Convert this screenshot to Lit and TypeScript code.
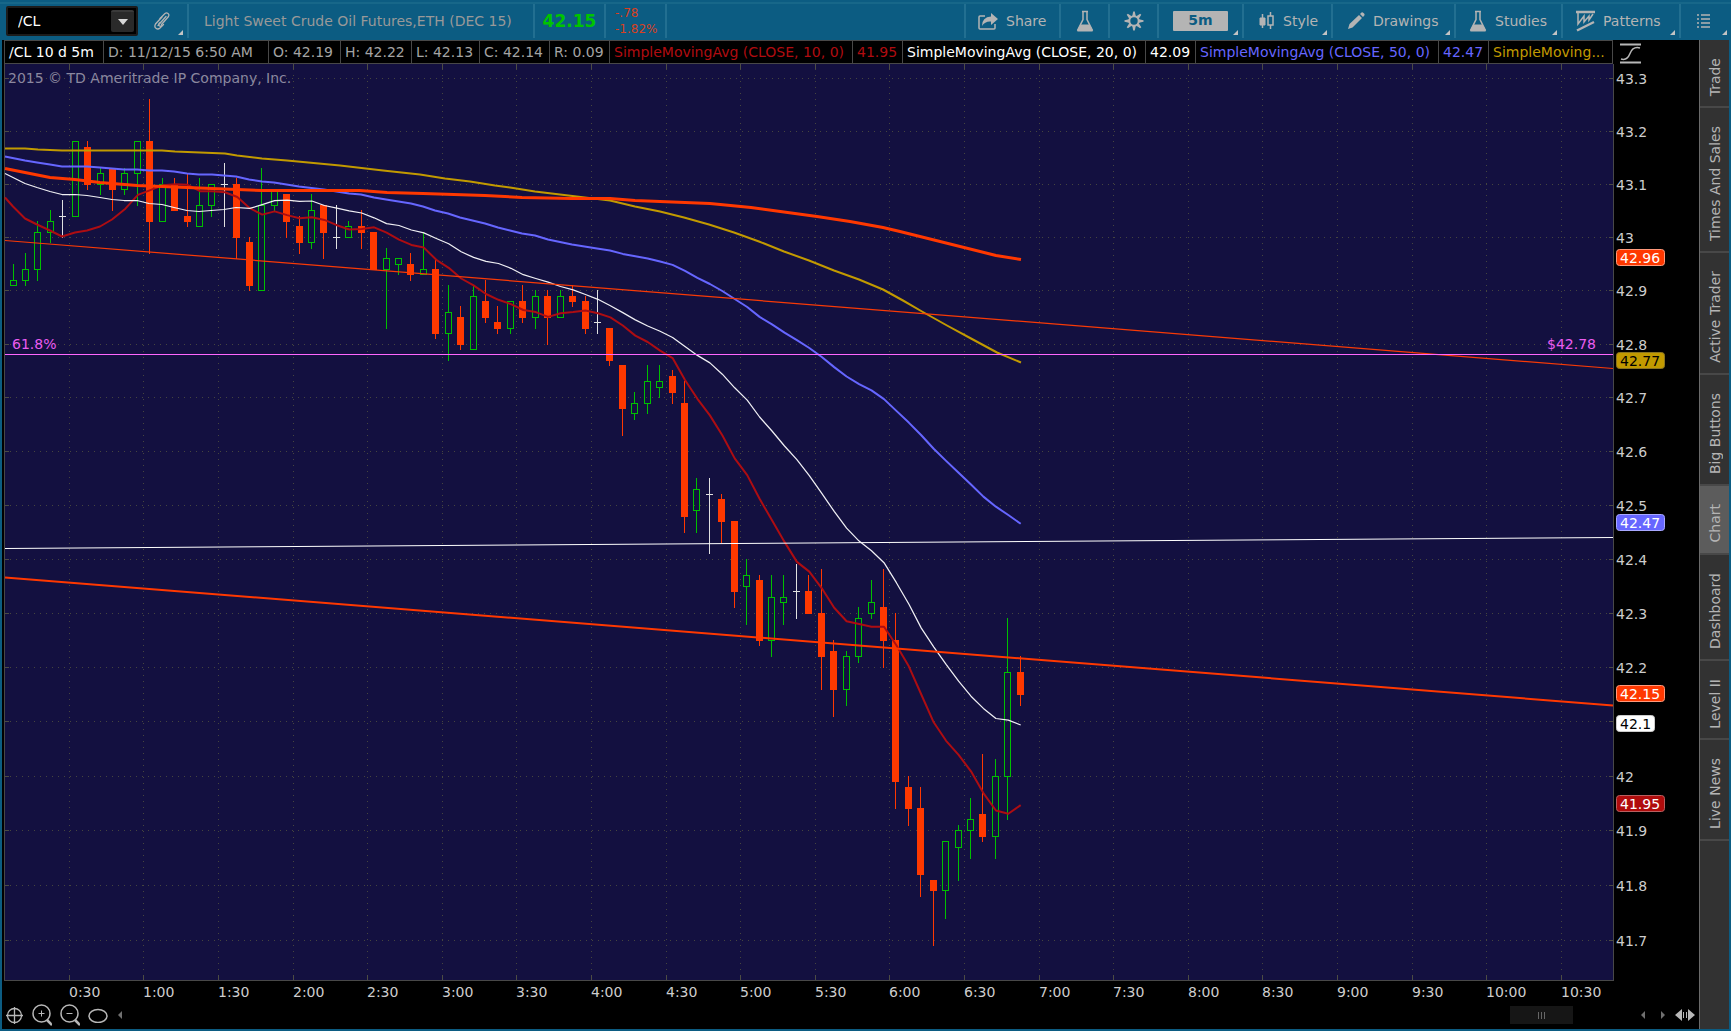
import { LitElement, html, svg, css } from "lit";
import { customElement, state } from "lit/decorators.js";
import { classMap } from "lit/directives/class-map.js";

type Point = [number, number];
type Kind = "up" | "down" | "flat";
interface Candle { kind: Kind; high: number; top: number; bottom: number; low: number; }

/* Five-minute bars: kind, high, body top, body bottom, low (cents above $41). */
const BARS = `
u195,192,191,191 u197,194,192,191 u203,201,194,192 u205,203,201,199 f207,204,204,200 u218,218,204,204
d218,217,210,209 u213,212,210,208 d213,213,209,205 u213,212,209,208 u218,218,212,206 d226,218,203,197
u211,210,203,203 d211,210,205,205 d212,204,203,202 u211,206,202,202 u210,210,206,204 f214,210,210,202
d211,210,200,196 d200,199,191,190 u213,206,190,190 u209,209,206,205 d208,208,203,200 d204,202,199,197
u208,205,199,198 d206,206,201,196 f206,200,200,198 u203,202,200,200 d205,202,201,198 d201,201,194,194
u198,196,194,183 u196,196,195,193 d197,195,193,192 u201,194,193,193 d196,194,182,181 u191,186,182,177
d187,185,180,179 u191,189,179,179 d192,188,185,184 d187,184,183,182 u188,188,183,182 d191,188,185,184
u190,189,185,183 d190,189,185,180 u190,189,185,185 d191,189,188,187 d189,188,183,182 f190,184,184,182
d183,183,177,176 d176,176,168,163 u171,169,167,166 u176,173,169,167 u176,173,172,170 d175,174,171,169
d173,169,148,145 u155,153,149,145 f155,152,152,141 d152,151,147,143 d147,147,134,131 u140,137,135,128
d137,136,125,124 u137,133,125,122 u137,133,132,128 f139,134,134,129 d137,134,130,130 d138,130,122,116
d125,123,116,111 u123,122,116,113 u131,129,122,121 u136,132,130,129 d138,131,125,120 d130,125,99,94
d100,98,94,91 d98,94,82,78 d81,81,79,69 u88,88,79,74 u91,90,87,81 u96,92,90,85
d104,93,89,88 u103,100,89,85 u129,119,100,92 d122,119,115,113`;

const KINDS: Record<string, Kind> = { u: "up", d: "down", f: "flat" };
const CANDLES: Candle[] = BARS.trim().split(/\s+/).map((bar) => {
  const [high, top, bottom, low] = bar.slice(1).split(",").map((n) => 41 + Number(n) / 100);
  return { kind: KINDS[bar[0]], high, top, bottom, low };
});
const CLOSES = CANDLES.map((c) => (c.kind === "up" ? c.top : c.bottom));

/* Chart units: the plot runs from 4 to 1613 across and from 64 to 980 down. */
const barX = (i: number) => 13 + 12.435 * i;
const priceY = (p: number) => 78.3 + 22895 * Math.log(43.3 / p);

const average = (period: number): Point[] =>
  CLOSES.slice(period - 1).map((_, k) => {
    const sum = CLOSES.slice(k, k + period).reduce((a, b) => a + b, 0);
    return [barX(k + period - 1) + 0.5, priceY(sum / period)];
  });

const SMA10: Point[] = [[5, 197], [13, 206], [25, 218], [37, 224], [50, 230], [62, 236], [75, 232], [87, 230], [100, 226], [112, 219], ...average(10)];
const SMA20: Point[] = [[5, 173], [13, 177], [25, 183], [37, 187], [50, 191], [62, 194], [75, 194], [87, 195], [100, 197], [112, 199], [124, 200],
  [137, 200], [149, 203], [162, 204], [174, 207], [187, 210], [199, 211], [211, 210], [224, 209], [236, 207], ...average(20)];
const SMA50: Point[] = [[5, 156], [25, 160], [37, 162], [50, 164], [62, 166], [87, 166], [100, 167], [124, 169], [137, 169], [149, 170], [162, 170],
  [174, 171], [187, 173], [199, 174], [212, 174], [236, 176], [249, 179], [262, 181], [274, 182], [299, 186], [324, 189], [349, 193],
  [361, 194], [374, 197], [386, 199], [411, 203], [423, 206], [435, 210], [448, 213], [460, 217], [485, 223], [498, 227], [510, 230],
  [522, 233], [535, 235], [548, 239], [572, 244], [597, 248], [610, 250], ...average(50)];
const SMA100: Point[] = [[5, 148], [25, 148], [38, 149], [62, 150], [162, 150], [175, 151], [200, 152], [225, 153], [237, 155], [262, 158], [287, 160],
  [340, 165], [383, 170], [420, 174], [445, 178], [470, 181], [495, 185], [510, 187], [535, 191], [560, 194], [585, 197], [610, 200],
  [635, 206], [660, 211], [684, 217], [709, 224], [734, 232], [759, 241], [784, 251], [809, 260], [834, 270], [859, 279], [883, 289],
  [903, 300], [922, 311], [947, 325], [971, 338], [997, 352], [1021, 362]];
const SMA200: Point[] = [[5, 168], [25, 172], [50, 177], [75, 179], [100, 182], [137, 185], [162, 186], [187, 187], [212, 188], [262, 190], [360, 190],
  [387, 192], [423, 193], [485, 195], [522, 197], [572, 198], [610, 198], [635, 200], [660, 201], [710, 203], [751, 207], [773, 210],
  [817, 216], [850, 221], [883, 227], [900, 231], [996, 255], [1021, 259]];

const STUDY_CELLS = [
  ["/CL 10 d 5m", "white"], ["D: 11/12/15 6:50 AM", "grey"], ["O: 42.19", "grey"], ["H: 42.22", "grey"], ["L: 42.13", "grey"],
  ["C: 42.14", "grey"], ["R: 0.09", "grey"], ["SimpleMovingAvg (CLOSE, 10, 0)", "red"], ["41.95", "red"],
  ["SimpleMovingAvg (CLOSE, 20, 0)", "white"], ["42.09", "white"], ["SimpleMovingAvg (CLOSE, 50, 0)", "blue"], ["42.47", "blue"],
  ["SimpleMoving...", "gold"],
];
const TABS = ["Trade", "Times And Sales", "Active Trader", "Big Buttons", "Chart", "Dashboard", "Level II", "Live News"];
const PRICES = [43.3, 43.2, 43.1, 43, 42.9, 42.8, 42.7, 42.6, 42.5, 42.4, 42.3, 42.2, 42.1, 42, 41.9, 41.8, 41.7];
const TAGS: [string, number, string, string, string][] = [
  ["42.96", 258, "#ff3800", "#ff9a7c", "#fff"], ["42.77", 361, "#c29a00", "#8a7420", "#000"], ["42.47", 523, "#6666ff", "#a8a8ff", "#fff"],
  ["42.15", 694, "#ff3800", "#ff9a7c", "#fff"], ["42.1", 724, "#ffffff", "#cccccc", "#000"], ["41.95", 804, "#b00c0c", "#b86060", "#fff"],
];

const flask = html`<svg width="18" height="22" viewBox="0 0 18 22"><path d="M6 1.5h6M7 2v7.5L2 19.5h14L11 9.5V2" fill="none" stroke="currentColor" stroke-width="1.5"/><path d="M4.5 14.5h9L17 20.500q0 1-1 1H2q-1 0-1-1z" fill="currentColor"/></svg>`;
const corner = html`<svg class="corner" width="5" height="5"><path d="M5 0V5H0z" fill="#c4c4c4"/></svg>`;

@customElement("price-chart")
export class PriceChart extends LitElement {
  static styles = css`
    :host { display: block; min-height: 0; min-width: 0; overflow: hidden; }
    .canvas { display: block; width: 100%; height: 100%; background: #000; font: 14px "DejaVu Sans", sans-serif; }
    .axis { fill: #cdcdcd; }
    .grid { stroke: #45453f; stroke-dasharray: 1 5; }
    .tick { stroke: #4c4c44; }
    .crisp { shape-rendering: crispEdges; }
    .note { fill: #8b889f; }
    .fib { fill: #ea5cf0; }
  `;
  @state() private w = 1696;
  @state() private h = 940;
  private watcher = new ResizeObserver(([e]) => {
    this.w = Math.round(e.contentRect.width);
    this.h = Math.round(e.contentRect.height);
  });
  connectedCallback() { super.connectedCallback(); this.watcher.observe(this); }
  disconnectedCallback() { this.watcher.disconnect(); super.disconnectedCallback(); }

  private x = (v: number) => ((v - 3) * (this.w - 86)) / 1610;
  private y = (v: number) => ((v - 64) * (this.h - 24)) / 916;
  private px = (v: number) => Math.floor(this.x(v));
  private py = (p: number) => Math.floor(this.y(priceY(p)));

  private curve(points: Point[], color: string, width: number) {
    return svg`<polyline points=${points.map(([a, b]) => `${this.x(a).toFixed(1)},${(this.y(b) + 0.5).toFixed(1)}`).join(" ")}
      fill="none" stroke=${color} stroke-width=${width} stroke-linejoin="round"/>`;
  }

  private candle(c: Candle, i: number) {
    const x = this.px(barX(i));
    const [hi, top, bot, lo] = [c.high, c.top, c.bottom, c.low].map(this.py);
    const m = x + 0.5;
    if (c.kind === "flat")
      return svg`<path d="M${m} ${hi}V${lo + 1}M${x - 3} ${top + 0.5}h7" stroke="#e0e0e0"/>`;
    if (c.kind === "down")
      return svg`<path d="M${m} ${hi}V${lo + 1}" stroke="#ff3800"/><rect x=${x - 3} y=${top} width="7" height=${bot - top + 1} fill="#ff3800"/>`;
    return svg`<path d="M${m} ${hi}V${top}M${m} ${bot}V${lo + 1}M${x - 2.5} ${top + 0.5}h6V${bot + 0.5}h-6z" fill="none" stroke="#00c000"/>`;
  }

  render() {
    const right = this.w - 86, bottom = this.h - 24;
    const times = Array.from({ length: 21 }, (_, k) => {
      const half = k + 1;
      return { label: `${Math.floor(half / 2)}:${half % 2 ? "30" : "00"}`, x: this.px(69.3 + 74.6 * k) };
    });
    return html`<svg class="canvas" role="img" aria-label="Crude oil futures, five minute candles">
      <rect x="1" y="0" width=${right} height=${bottom} fill="#131040"/>
      <g class="crisp">
        ${times.map((t) => svg`<path class="grid" d="M${t.x + 0.5} 5V${bottom - 5}"/><path class="tick" d="M${t.x + 0.5} 0v5M${t.x + 0.5} ${bottom}v-5"/>`)}
        ${PRICES.map((p) => { const y = this.py(p) + 0.5;
          return svg`<path class="grid" d="M7 ${y}H${right - 5}"/><path class="tick" d="M1 ${y}h5M${right} ${y}h-4"/>`; })}
        <path d=${`M1.5 0V${bottom + 0.5}H${right + 0.5}V0`} fill="none" stroke="#484848"/>
        ${CANDLES.map((c, i) => this.candle(c, i))}
      </g>
      ${this.curve(SMA10, "#ad0d12", 2)}
      ${this.curve(SMA20, "#f0f0f4", 1.25)}
      ${this.curve(SMA50, "#6666ff", 2)}
      ${this.curve(SMA100, "#c29a00", 2)}
      ${this.curve([[5, 240], [1613, 368]], "#f83a06", 1.25)}
      ${this.curve([[5, 548], [1613, 537]], "#ffffff", 1)}
      ${this.curve([[5, 577], [1613, 705]], "#ff3800", 2)}
      ${this.curve([[5, 354], [1613, 354]], "#ff66ff", 1)}
      ${this.curve(SMA200, "#ff3800", 3)}
      <text class="note" x="5" y=${this.y(83)}>2015 © TD Ameritrade IP Company, Inc.</text>
      <text class="fib" x="9" y=${this.y(349)}>61.8%</text>
      <text class="fib" x=${right - 17} y=${this.y(349)} text-anchor="end">$42.78</text>
      ${PRICES.filter((p) => p !== 42.1).map((p) => svg`<text class="axis" x=${right + 3} y=${this.py(p) + 6}>${p}</text>`)}
      ${TAGS.map(([label, y, fill, edge, ink]) => svg`
        <rect x=${right + 3.5} y=${Math.round(this.y(y)) - 8.5} width=${label.length > 4 ? 48 : 38} height="16" rx="3" fill=${fill} stroke=${edge}/>
        <text x=${right + 7} y=${Math.round(this.y(y)) + 5} fill=${ink}>${label}</text>`)}
      ${times.map((t) => svg`<text class="axis" x=${t.x} y=${bottom + 17}>${t.label}</text>`)}
    </svg>`;
  }
}

@customElement("app-root")
export class AppRoot extends LitElement {
  static styles = css`
    :host { display: block; font: 14px/18px "DejaVu Sans", sans-serif; color: #b4b4b4; }
    * { box-sizing: border-box; }
    button, input { font: inherit; color: inherit; background: none; border: 0; padding: 0; margin: 0; border-radius: 0; }
    svg { display: block; flex: none; }
    .app { display: flex; flex-direction: column; height: 100vh; background: #0c5c82; }
    .toolbar { display: flex; height: 40px; padding: 4px 0 2px; background: linear-gradient(#0c5c82 2px, #176789 2px, #176789 4px, #0c5c82 4px); }
    .symbol { display: flex; align-items: center; width: 132px; height: 30px; margin: 2px 15px 2px 6px; background: #000; border: 2px solid #1c1c1c; border-radius: 2px; }
    .symbol-input { flex: 1; min-width: 0; padding-left: 10px; color: #fff; outline: 0; }
    .symbol-drop { display: flex; align-items: center; justify-content: center; width: 23px; height: 22px; margin-right: 2px; background: #2a2a2a; border-top: 2px solid #3a3a3a; border-radius: 2px; }
    .item { position: relative; display: flex; align-items: center; gap: 8px; border-left: 2px solid #226f91; white-space: nowrap; }
    .link { width: 34px; border: 0; }
    .title { width: 346px; padding-left: 15px; color: #999; }
    .last { width: 71px; justify-content: center; color: #00c400; font-size: 17px; font-weight: bold; }
    .change { width: 61px; flex-direction: column; align-items: flex-start; justify-content: center; gap: 0; padding-left: 9px; color: #d84020; font-size: 12px; line-height: 16px; }
    .fill { flex: 1; }
    .share { width: 95px; padding-left: 12px; }
    .tool { width: 49px; justify-content: center; }
    .period { width: 85px; justify-content: center; }
    .chip { width: 55px; height: 20px; margin-bottom: 1px; background: #b4b4b4; color: #0c5c82; font-weight: bold; text-align: center; border-radius: 1px; }
    .style { width: 89px; padding-left: 15px; }
    .drawings { width: 123px; padding-left: 14px; }
    .studies { width: 107px; padding-left: 13px; }
    .patterns { width: 118px; padding-left: 13px; }
    .list { width: 52px; padding-left: 16px; }
    .corner { position: absolute; right: 4px; bottom: 3px; }
    .body { flex: 1; display: flex; min-height: 0; padding: 0 2px 2px; }
    .main { flex: 1; min-width: 0; display: grid; grid-template-rows: 24px minmax(0, 1fr) 25px; background: #000; padding-left: 1px; }
    .strip { display: flex; padding-left: 1px; }
    .cells { flex: 1; min-width: 0; display: grid; grid-template-columns: 99px 165px 72px 71px 68px 70px 60px 243px 50px 243px 50px 243px 50px 1fr; border: solid #484848; border-width: 1px 0 1px 1px; }
    .cell { padding: 2px 0 0 4px; border-right: 1px solid #484848; white-space: nowrap; overflow: hidden; }
    .white { color: #fff; } .grey { color: #a4a4a4; } .red { color: #b00c10; } .blue { color: #6666ff; } .gold { color: #c29a00; }
    .scale { width: 86px; padding-left: 7px; }
    .footer { display: flex; align-items: center; color: #b8b8b8; padding: 0 4px 3px 3px; }
    .views { display: flex; align-items: center; gap: 8px; flex: 1; }
    .thumb { display: flex; align-items: center; justify-content: center; gap: 2px; width: 63px; height: 18px; margin-right: 68px; background: #161616; }
    .grip { width: 1px; height: 7px; background: #666; }
    .step { color: #707070; }
    .scroll { display: flex; gap: 14px; margin-right: 10px; }
    .tabs { width: 30px; display: flex; flex-direction: column; background: #323232; border-left: 1px solid #6a6a6a; }
    .tab { display: flex; justify-content: center; padding: 18px 0 10px; border-bottom: 2px solid #484848; }
    .tab-text { writing-mode: vertical-rl; transform: rotate(180deg); line-height: 18px; }
    .active { background: #5c5c5c; }
  `;
  @state() private tab = "Chart";

  private lens(sign: string) {
    return html`<svg width="20" height="22" fill="none" stroke="currentColor"><circle cx="9.5" cy="9.5" r="8.5" stroke-width="1.5"/><path d=${sign}/><path d="M15 16l5 5" stroke-width="2.5"/></svg>`;
  }

  render() {
    return html`<div class="app">
      <header class="toolbar">
        <div class="symbol">
          <input class="symbol-input" type="text" aria-label="Symbol" .value=${"/CL"} />
          <button class="symbol-drop" aria-label="Symbol list"><svg width="10" height="6"><path d="M0 0h10L5 6z" fill="#d8d8d8"/></svg></button>
        </div>
        <button class="item link" aria-label="Link">
          <svg width="18" height="18" viewBox="0 0 18 18" fill="none" stroke="#b4b4b4" stroke-width="1.3" stroke-linecap="round"><path d="M7 6.5l5-5q1.500-1.200 3 0t.500 3L8.500 12.500"/><path d="M10.500 12.500L7 16q-2 1.800-4 .300T2.500 12L9 5"/><path d="M5 13.500l8-9M7 10.500q-2 1.500-1 3t3 0"/></svg>${corner}
        </button>
        <div class="item title">Light Sweet Crude Oil Futures,ETH (DEC 15)</div>
        <div class="item last">42.15</div>
        <div class="item change"><span>-.78</span><span>-1.82%</span></div>
        <div class="item fill"></div>
        <button class="item share"><svg width="20" height="17" viewBox="0 0 20 17"><path d="M7 3H2Q1 3 1 4V15Q1 16 2 16H16Q17 16 17 15V11" fill="none" stroke="currentColor" stroke-width="1.5"/><path d="M13 0l7 6-7 6V8.500Q7 8 4 13 4 4 13 3.500z" fill="currentColor"/></svg>Share</button>
        <button class="item tool" aria-label="Lab">${flask}</button>
        <button class="item tool" aria-label="Settings"><svg width="20" height="20" viewBox="-10 -10 20 20" stroke="currentColor" fill="none"><circle r="4.7" stroke-width="2"/>${[0, 45, 90, 135, 180, 225, 270, 315].map((a) => svg`<path transform="rotate(${a})" d="M-1.7 -5L-.8 -9.5H.8L1.7 -5z" fill="currentColor" stroke="none"/>`)}</svg></button>
        <button class="item period"><span class="chip">5m</span>${corner}</button>
        <button class="item style"><svg width="16" height="20" viewBox="0 0 16 20" stroke="currentColor" fill="none"><path d="M3.500 3v14M11.500 1v4M11.500 14v4" stroke-width="1.5"/><path d="M1 7h5v7H1z" fill="currentColor"/><path d="M9 5h5v9H9z" stroke-width="1.5"/></svg>Style${corner}</button>
        <button class="item drawings"><svg width="18" height="18" viewBox="0 0 18 18" fill="currentColor"><path d="M1 17l1.500-5L12 3l3 3-9.500 9.500zM13 2l1.500-1.500Q15.500 0 16.500 1l.800.800q.700 1 0 1.700L16 5z"/></svg>Drawings${corner}</button>
        <button class="item studies">${flask}Studies${corner}</button>
        <button class="item patterns"><svg width="19" height="22" viewBox="0 0 19 22" fill="none" stroke="currentColor"><path d="M0 2h19M1 20.500L18 12" stroke-width="2.5"/><path d="M2 3v11l6-8v6l5-6v4l4-6" stroke-width="1.5"/></svg>Patterns${corner}</button>
        <button class="item list" aria-label="Menu"><svg width="14" height="14" stroke="currentColor" stroke-width="1.5"><path d="M0 1h2M4 1h9M0 5h2M4 5h9M0 9h2M4 9h9M0 13h2M4 13h9"/></svg>${corner}</button>
      </header>
      <div class="body">
        <main class="main">
          <div class="strip">
            <div class="cells">${STUDY_CELLS.map(([text, tone]) => html`<div class="cell ${tone}">${text}</div>`)}</div>
            <button class="scale" aria-label="Scale"><svg width="21" height="24" fill="none" stroke="#b8b8b8"><path d="M0 4.500h21M0 22.500h21" stroke-width="2"/><path d="M1 19Q7 21 10 13.500T20 8" stroke-width="1.5"/></svg></button>
          </div>
          <price-chart></price-chart>
          <footer class="footer">
            <div class="views">
              <button aria-label="Crosshair"><svg width="18" height="18" fill="none" stroke="currentColor" stroke-width="1.3"><circle cx="8.500" cy="9.500" r="7"/><path d="M0 9.500h17M8.500 1v17"/></svg></button>
              <button aria-label="Zoom in">${this.lens("M6.5 9.5h6M9.5 6.5v6")}</button>
              <button aria-label="Zoom out">${this.lens("M6.5 9.5h6")}</button>
              <button aria-label="Oval"><svg width="20" height="16" fill="none" stroke="currentColor" stroke-width="1.5"><ellipse cx="10" cy="9" rx="9" ry="6.5"/></svg></button>
              <button class="step" aria-label="Collapse"><svg width="8" height="8"><path d="M6 0v8L2 4z" fill="currentColor"/></svg></button>
            </div>
            <div class="thumb"><span class="grip"></span><span class="grip"></span><span class="grip"></span></div>
            <div class="scroll">
              <button class="step" aria-label="Scroll left"><svg width="5" height="8"><path d="M4 0v8L0 4z" fill="currentColor"/></svg></button>
              <button class="step" aria-label="Scroll right"><svg width="5" height="8"><path d="M1 0v8l4-4z" fill="currentColor"/></svg></button>
            </div>
            <button aria-label="Expand"><svg width="20" height="12" fill="currentColor"><path d="M7 0v12L0 6zM13 0v12l7-6zM8 3h1v6H8zM11 3h1v6h-1z"/></svg></button>
          </footer>
        </main>
        <nav class="tabs">${TABS.map((t) => html`<button class=${classMap({ tab: true, active: t === this.tab })} @click=${() => (this.tab = t)}><span class="tab-text">${t}</span></button>`)}</nav>
      </div>
    </div>`;
  }
}
